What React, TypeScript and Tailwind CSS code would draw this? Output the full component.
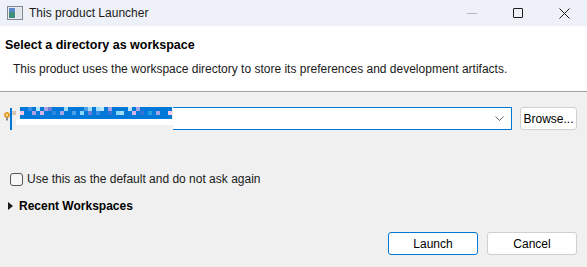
import React from "react";

const mosaic: string[][] = [
    ["bg-[#0078d7]", "bg-[#0078d7]", "bg-[#3a8ee6]", "bg-[#0078d7]", "bg-[#b6e6fb]", "bg-[#0078d7]", "bg-[#a7a3e4]", "bg-[#6f7fd8]", "bg-[#0078d7]", "bg-[#0078d7]", "bg-[#0078d7]", "bg-[#9fdcf6]", "bg-[#0078d7]", "bg-[#0078d7]", "bg-[#0078d7]", "bg-[#0078d7]", "bg-[#4a9de6]", "bg-[#9fdcf6]", "bg-[#0078d7]", "bg-[#9fdcf6]", "bg-[#c1e5f8]", "bg-[#0078d7]", "bg-[#a7a3e4]", "bg-[#0078d7]", "bg-[#0078d7]", "bg-[#0078d7]", "bg-[#0078d7]", "bg-[#c1e5f8]", "bg-[#0078d7]", "bg-[#a7a3e4]", "bg-[#0078d7]", "bg-[#0078d7]", "bg-[#0078d7]", "bg-[#0078d7]", "bg-[#0078d7]", "bg-[#0078d7]", "bg-[#0078d7]", "bg-[#0078d7]"],
    ["bg-[#f3c8e6]", "bg-[#0078d7]", "bg-[#0078d7]", "bg-[#b39ee0]", "bg-[#0078d7]", "bg-[#d5b3e8]", "bg-[#0078d7]", "bg-[#0078d7]", "bg-[#2c88e0]", "bg-[#0078d7]", "bg-[#a7a3e4]", "bg-[#0078d7]", "bg-[#0078d7]", "bg-[#4a9de6]", "bg-[#0078d7]", "bg-[#89d6f5]", "bg-[#0078d7]", "bg-[#6f7fd8]", "bg-[#0078d7]", "bg-[#3a8ee6]", "bg-[#0078d7]", "bg-[#0078d7]", "bg-[#3a6fd8]", "bg-[#0078d7]", "bg-[#89d6f5]", "bg-[#9fdcf6]", "bg-[#0078d7]", "bg-[#0078d7]", "bg-[#d5b3e8]", "bg-[#0078d7]", "bg-[#3a6fd8]", "bg-[#0078d7]", "bg-[#2c9fe0]", "bg-[#0078d7]", "bg-[#a7a3e4]", "bg-[#0078d7]", "bg-[#0078d7]", "bg-[#f3c8e6]"],
    ["bg-[#0078d7]", "bg-[#0078d7]", "bg-[#0078d7]", "bg-[#0078d7]", "bg-[#0078d7]", "bg-[#0078d7]", "bg-[#0078d7]", "bg-[#0078d7]", "bg-[#0078d7]", "bg-[#0078d7]", "bg-[#0078d7]", "bg-[#0078d7]", "bg-[#0078d7]", "bg-[#0078d7]", "bg-[#0078d7]", "bg-[#0078d7]", "bg-[#0078d7]", "bg-[#0078d7]", "bg-[#0078d7]", "bg-[#0078d7]", "bg-[#0078d7]", "bg-[#0078d7]", "bg-[#0078d7]", "bg-[#0078d7]", "bg-[#0078d7]", "bg-[#0078d7]", "bg-[#0078d7]", "bg-[#0078d7]", "bg-[#0078d7]", "bg-[#0078d7]", "bg-[#0078d7]", "bg-[#0078d7]", "bg-[#0078d7]", "bg-[#0078d7]", "bg-[#0078d7]", "bg-[#0078d7]", "bg-[#0078d7]", "bg-[#0078d7]"],
];

function AppIcon() {
    return (
        <svg width="16" height="14" viewBox="0 0 16 14" className="shrink-0">
            <rect x="0.5" y="0.5" width="15" height="13" fill="#e8ecf0" stroke="#7f8a94" />
            <rect x="2" y="2" width="6" height="10" fill="#3f8f78" />
            <rect x="2" y="2" width="6" height="4" fill="#5a86c8" />
            <rect x="9" y="2" width="5" height="10" fill="#dfe4e8" />
        </svg>
    );
}

function Bulb() {
    return (
        <svg width="6" height="9" viewBox="0 0 6 9">
            <circle cx="3" cy="3" r="2.5" fill="#f5a623" stroke="#d9820b" strokeWidth="0.8" />
            <circle cx="3" cy="3" r="1" fill="#fff3c4" />
            <rect x="2" y="5.5" width="2" height="3" fill="#8a8f96" />
        </svg>
    );
}

export default function App() {
    return (
        <div className="w-[587px] h-[267px] flex flex-col bg-[#f0f0f0] text-[12px] text-black font-['Liberation_Sans',sans-serif] overflow-hidden">
            {/* title bar */}
            <div className="h-[26px] flex items-center bg-[#eef2f8] shrink-0">
                <div className="pl-[7px] pr-[6px] flex items-center shrink-0">
                    <AppIcon />
                </div>
                <span className="text-[12px] text-[#1a1a1a] flex-1 min-w-0">This product Launcher</span>
                <div className="flex items-center h-full shrink-0">
                    <div className="w-[46px] h-full flex items-center justify-center">
                        <div className="w-[10px] h-px bg-[#b5b9be]" />
                    </div>
                    <div className="w-[46px] h-full flex items-center justify-center">
                        <div className="w-[10px] h-[10px] border border-[#1a1a1a] rounded-[1px]" />
                    </div>
                    <div className="w-[46px] h-full flex items-center justify-center">
                        <svg width="11" height="11" viewBox="0 0 11 11">
                            <path d="M0.5 0.5 L10.5 10.5 M10.5 0.5 L0.5 10.5" stroke="#1a1a1a" strokeWidth="1" />
                        </svg>
                    </div>
                </div>
            </div>

            {/* header */}
            <div className="h-[66px] bg-white border-b border-[#a0a0a0] shrink-0 pt-[11px]">
                <div className="pl-[5px] font-bold text-[12.5px] leading-[16px]">Select a directory as workspace</div>
                <div className="pl-[13px] mt-[8px] leading-[16px] text-[#1a1a1a]">
                    This product uses the workspace directory to store its preferences and development artifacts.
                </div>
            </div>

            {/* body */}
            <div className="flex-1 flex flex-col px-[10px]">
                <div className="flex items-center gap-[8px] mt-[15px] h-[23px]">
                    <div className="relative flex-1 h-[23px] border border-[#0078d7] bg-white flex items-center justify-end pr-[7px]">
                        <svg width="9" height="5" viewBox="0 0 9 5">
                            <path d="M0.5 0.5 L4.5 4.5 L8.5 0.5" fill="none" stroke="#606060" strokeWidth="1" />
                        </svg>
                        {/* redacted path */}
                        <div className="absolute left-[-11px] top-[-2px] w-[173px] h-[25px] bg-[#f0f0f0]">
                            <div className="absolute left-[4px] top-[6px]">
                                <Bulb />
                            </div>
                            <div className="absolute left-[10px] top-[2px] w-[2px] h-[22px] bg-[#0078d7]" />
                            <div className="absolute left-[12px] top-[5px] w-[4px] h-[4px] bg-[#d8c4b4]" />
                            <div className="absolute left-[16px] top-[13px] w-[157px] h-[6px] bg-white" />
                            <div className="absolute left-[20px] top-[1px] flex flex-col">
                                {mosaic.map((row, i) => (
                                    <div key={i} className="flex">
                                        {row.map((c, j) => (
                                            <div key={j} className={`w-[4px] h-[4px] ${c}`} />
                                        ))}
                                    </div>
                                ))}
                            </div>
                        </div>
                    </div>
                    <button className="w-[57px] h-[23px] bg-white border border-[#d0d0d0] rounded-[3px] text-[12px] text-black">
                        Browse...
                    </button>
                </div>

                <label className="flex items-center mt-[42px] h-[14px]">
                    <span className="w-[13px] h-[13px] border border-[#555] rounded-[3px] bg-[#f7f7f7]" />
                    <span className="ml-[4px] text-[#1a1a1a]">Use this as the default and do not ask again</span>
                </label>

                <div className="flex items-center mt-[12px] h-[16px] -ml-[2px]">
                    <svg width="5" height="8" viewBox="0 0 5 8">
                        <path d="M0 0 L5 4 L0 8 Z" fill="#1a1a1a" />
                    </svg>
                    <span className="ml-[6px] font-bold text-[12px]">Recent Workspaces</span>
                </div>

                <div className="flex justify-end gap-[9px] mt-[18px]">
                    <button className="w-[90px] h-[23px] bg-white border border-[#0078d7] rounded-[3px] text-[12px]">
                        Launch
                    </button>
                    <button className="w-[90px] h-[23px] bg-white border border-[#d0d0d0] rounded-[3px] text-[12px]">
                        Cancel
                    </button>
                </div>
            </div>
        </div>
    );
}
